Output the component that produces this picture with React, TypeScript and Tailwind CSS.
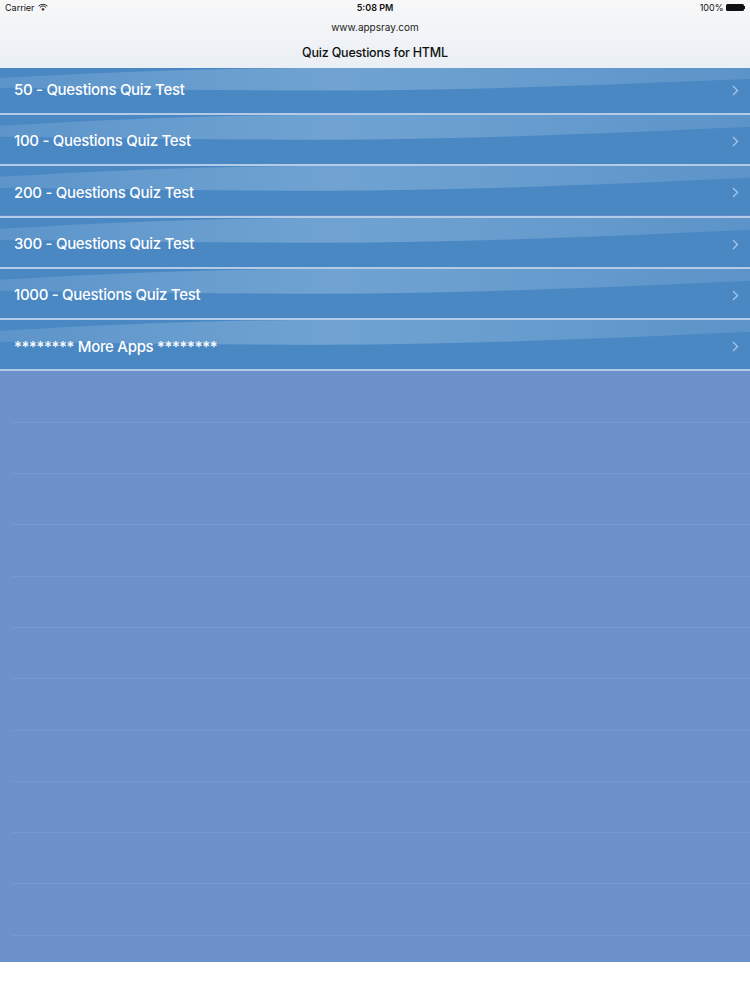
const items = [
  "50 - Questions Quiz Test",
  "100 - Questions Quiz Test",
  "200 - Questions Quiz Test",
  "300 - Questions Quiz Test",
  "1000 - Questions Quiz Test",
  "******** More Apps ********",
];

function Wave() {
  return (
    <svg
      className="absolute inset-0 h-full w-full"
      viewBox="0 0 750 50"
      preserveAspectRatio="none"
    >
      <defs>
        <linearGradient id="band" x1="0" y1="0" x2="1" y2="0">
          <stop offset="0" stopColor="#5d95ca" />
          <stop offset="0.45" stopColor="#70a3d2" />
          <stop offset="1" stopColor="#5c94c9" />
        </linearGradient>
      </defs>
      <rect width="750" height="50" fill="#4a88c4" />
      <path
        d="M0,11 C90,6 180,1 300,0 L750,0 L750,12 C620,18 470,25 320,25 C200,25 100,23 0,22 Z"
        fill="url(#band)"
      />
    </svg>
  );
}

function Chevron() {
  return (
    <svg width="7" height="11" viewBox="0 0 7 11" className="shrink-0">
      <polyline
        points="1,1 5.5,5.5 1,10"
        fill="none"
        stroke="#a9c6e6"
        strokeWidth="1.3"
      />
    </svg>
  );
}

function Row({ label, first }: { label: string; first?: boolean }) {
  return (
    <>
      <div
        className={`relative flex shrink-0 items-center ${first ? "h-[45px]" : "h-[49.3px] pt-[4px]"}`}
      >
        <Wave />
        <span className="relative flex-1 pl-[14px] text-[15px] font-medium tracking-[-0.3px] text-white">
          {label}
        </span>
        <span className="relative pr-[11px]">
          <Chevron />
        </span>
      </div>
      <div className="h-[2px] shrink-0 bg-[#b3cbe7]" />
    </>
  );
}

export default function App() {
  return (
    <div
      className="flex h-[1000px] w-[750px] flex-col bg-white"
      style={{ fontFamily: "Inter, 'Noto Sans', sans-serif" }}
    >
      <div className="shrink-0 bg-gradient-to-b from-[#f8f8f9] to-[#eaeff5]">
        <div className="relative flex h-[15px] items-center justify-between px-[5px] text-[9px] text-[#111]">
          <div className="flex items-center gap-[3px]">
            <span>Carrier</span>
            <svg width="10" height="7" viewBox="0 0 11 8">
              <path d="M5.5,8 L3.6,5.8 A2.8,2.8 0 0 1 7.4,5.8 Z" fill="#222" />
              <path d="M1.9,4 A5.2,5.2 0 0 1 9.1,4" fill="none" stroke="#222" strokeWidth="1.1" />
              <path d="M0.4,2.4 A7.4,7.4 0 0 1 10.6,2.4" fill="none" stroke="#222" strokeWidth="1.1" />
            </svg>
          </div>
          <span className="absolute left-1/2 -translate-x-1/2 font-semibold">5:08 PM</span>
          <div className="flex items-center gap-[2px]">
            <span>100%</span>
            <div className="flex items-center">
              <div className="h-[7px] w-[18px] rounded-[1.5px] bg-[#111]" />
              <div className="h-[3px] w-[1.5px] bg-[#111]" />
            </div>
          </div>
        </div>
        <div className="flex h-[53px] flex-col items-center">
          <span className="mt-[5px] text-[10px] text-[#222]">www.appsray.com</span>
          <span className="mt-[9px] text-[12.5px] font-medium tracking-[-0.2px] text-[#111]">
            Quiz Questions for HTML
          </span>
        </div>
      </div>
      <div className="flex h-[894px] shrink-0 flex-col overflow-hidden bg-[#6d91cb]">
        {items.map((label, i) => (
          <Row key={label} label={label} first={i === 0} />
        ))}
        {Array.from({ length: 12 }).map((_, i) => (
          <div key={i} className="h-[51.3px] shrink-0 pl-[12px]">
            <div className="h-[50.3px]" />
            <div className="h-px bg-[#7799ce]" />
          </div>
        ))}
      </div>
    </div>
  );
}
